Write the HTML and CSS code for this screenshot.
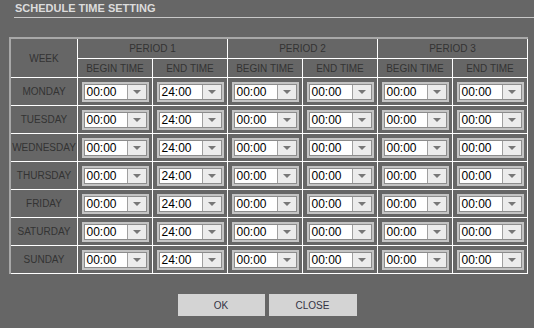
FILE: index.html
```html
<!DOCTYPE html>
<html lang="en">

<head>
    <meta charset="UTF-8">
    <title>Schedule Time Setting</title>
    <link rel="stylesheet" href="styles.css">
</head>

<body>
    <h1 class="title">SCHEDULE TIME SETTING</h1>

    <table class="sched">
        <colgroup>
            <col class="c-week">
            <col class="c-time" span="6">
        </colgroup>
        <thead>
            <tr class="head1">
                <th rowspan="2">WEEK</th>
                <th colspan="2">PERIOD 1</th>
                <th colspan="2">PERIOD 2</th>
                <th colspan="2">PERIOD 3</th>
            </tr>
            <tr class="head2">
                <th>BEGIN TIME</th>
                <th>END TIME</th>
                <th>BEGIN TIME</th>
                <th>END TIME</th>
                <th>BEGIN TIME</th>
                <th>END TIME</th>
            </tr>
        </thead>
        <tbody id="days"></tbody>
    </table>

    <div class="actions">
        <button class="btn ok">OK</button>
        <button class="btn close">CLOSE</button>
    </div>

    <script>
        // 每天的时间段
        const days = ['MONDAY', 'TUESDAY', 'WEDNESDAY', 'THURSDAY', 'FRIDAY', 'SATURDAY', 'SUNDAY'];
        const times = ['00:00', '24:00', '00:00', '00:00', '00:00', '00:00'];

        const body = document.getElementById('days');
        let html = '';
        days.forEach(function (day) {
            html += '<tr class="day"><td class="name">' + day + '</td>';
            times.forEach(function (t) {
                html += '<td><div class="sel"><div class="box"><span class="val">' + t +
                    '</span><span class="arr"></span></div></div></td>';
            });
            html += '</tr>';
        });
        body.innerHTML = html;
    </script>
</body>

</html>
```

FILE: styles.css
```css
body {
    margin: 0;
    background: #666666;
    font-family: "Liberation Sans", Arial, sans-serif;
    width: 534px;
    height: 328px;
    overflow: hidden;
}

.title {
    margin: 0 0 0 14px;
    padding: 2px 0 2px 1px;
    font-size: 11px;
    line-height: 13px;
    font-weight: bold;
    color: #dcdcdc;
    border-bottom: 1px solid #c8c8c8;
}

.sched {
    margin: 19px 0 0 9px;
    border-collapse: separate;
    border-spacing: 0;
    table-layout: fixed;
    width: 519px;
    border-top: 2px solid #a8a8a8;
    border-left: 2px solid #a8a8a8;
}

.c-week {
    width: 67px;
}

.c-time {
    width: 75px;
}

.sched th,
.sched td {
    padding: 0;
    border-right: 1px solid #ffffff;
    border-bottom: 1px solid #ffffff;
    font-size: 10px;
    font-weight: normal;
    color: #333333;
    text-align: center;
    white-space: nowrap;
    overflow: hidden;
}

.head1 th {
    height: 19px;
}

.head2 th {
    height: 18px;
}

.day td {
    height: 27px;
    vertical-align: top;
}

.day td.name {
    vertical-align: middle;
}

.sel {
    width: 67px;
    height: 20px;
    box-sizing: border-box;
    margin: 4px auto 0;
    border: 2px solid #c4c4c4;
    background: #dcdcdc;
}

.box {
    display: flex;
    height: 100%;
    box-sizing: border-box;
    border: 1px solid #8c8c8c;
}

.val {
    flex: 1;
    background: #ffffff;
    color: #000000;
    font-size: 12px;
    line-height: 14px;
    text-align: left;
    padding-left: 2px;
}

.arr {
    width: 18px;
    background: #ececec;
    border-left: 1px solid #a0a0a0;
    display: flex;
    align-items: center;
    justify-content: center;
}

.arr::after {
    content: "";
    border-left: 4px solid transparent;
    border-right: 4px solid transparent;
    border-top: 4px solid #777777;
}

.actions {
    display: flex;
    justify-content: center;
    gap: 4px;
    margin-top: 20px;
}

.btn {
    width: 87px;
    height: 22px;
    border: none;
    background: #d4d4d4;
    color: #333344;
    font-family: "Liberation Sans", Arial, sans-serif;
    font-size: 10px;
    padding: 0;
}

.btn.close {
    width: 88px;
}
```
